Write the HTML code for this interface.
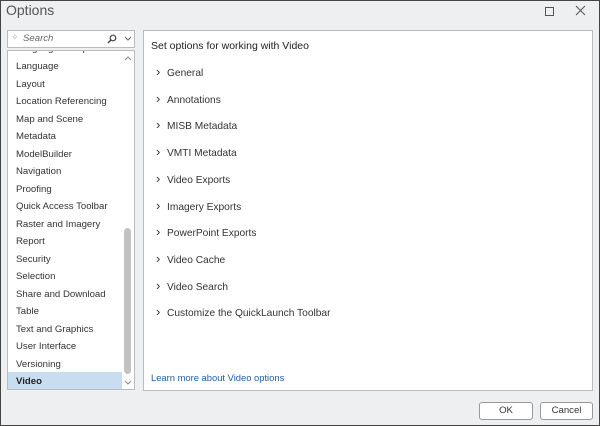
<!DOCTYPE html>
<html><head><style>
*{margin:0;padding:0;box-sizing:border-box}
body{width:600px;height:426px;background:#eeeff1;font-family:"Liberation Sans",sans-serif;color:#222;position:relative;overflow:hidden}
.frame{position:absolute;left:0;top:0;width:600px;height:426px;border:1px solid #444}
.title{position:absolute;left:6px;top:2px;font-size:14px;color:#555}
.abs{position:absolute}
.box{position:absolute;background:#fff;border:1px solid #bcbcbc}
.li{position:absolute;left:8px;font-size:9.6px;color:#333}
.ri{position:absolute;left:10px;font-size:10.2px;color:#333}
.ri span{display:inline-block;width:13px;font-size:13px;line-height:10px;position:relative;top:0px;left:2px}
.btn{position:absolute;top:402px;height:18px;background:#fff;border:1px solid #999;border-radius:3px;font-size:9.6px;text-align:center;line-height:16px;color:#333}
</style></head><body>
<div class="frame"></div>
<div class="title">Options</div>
<svg class="abs" style="left:544px;top:6px" width="12" height="12"><rect x="1.5" y="1.5" width="8" height="8" fill="none" stroke="#555" stroke-width="1"/></svg>
<svg class="abs" style="left:575px;top:5px" width="12" height="12"><path d="M1 1L10 10M10 1L1 10" stroke="#555" stroke-width="1"/></svg>

<div class="box" style="left:7px;top:30px;width:128px;height:18px">
 <span style="position:absolute;left:3px;top:1px;font-size:9px;color:#aaa">✧</span>
 <span style="position:absolute;left:15px;top:2px;font-size:9.6px;font-style:italic;color:#666">Search</span>
 <svg style="position:absolute;left:99px;top:3px" width="10" height="10"><circle cx="6" cy="4" r="2.8" fill="none" stroke="#444" stroke-width="1.2"/><path d="M4 6L1 9" stroke="#444" stroke-width="1.3"/></svg>
 <svg style="position:absolute;left:116px;top:5px" width="8" height="6"><path d="M1 1L4 4L7 1" fill="none" stroke="#666"/></svg>
</div>

<div class="box" style="left:7px;top:50px;width:128px;height:340px;overflow:hidden">
 <div class="li" style="top:-8px">Language Groups</div>
 <div class="li" style="top:10px">Language</div>
 <div class="li" style="top:27.5px">Layout</div>
 <div class="li" style="top:45px">Location Referencing</div>
 <div class="li" style="top:62.5px">Map and Scene</div>
 <div class="li" style="top:80px">Metadata</div>
 <div class="li" style="top:97.5px">ModelBuilder</div>
 <div class="li" style="top:115px">Navigation</div>
 <div class="li" style="top:132.5px">Proofing</div>
 <div class="li" style="top:150px">Quick Access Toolbar</div>
 <div class="li" style="top:167.5px">Raster and Imagery</div>
 <div class="li" style="top:185px">Report</div>
 <div class="li" style="top:202.5px">Security</div>
 <div class="li" style="top:220px">Selection</div>
 <div class="li" style="top:237.5px">Share and Download</div>
 <div class="li" style="top:255px">Table</div>
 <div class="li" style="top:272.5px">Text and Graphics</div>
 <div class="li" style="top:290px">User Interface</div>
 <div class="li" style="top:307.5px">Versioning</div>
 <div style="position:absolute;left:0;top:321px;width:114px;height:18px;background:#c9ddf0"></div>
 <div class="li" style="top:325px;font-weight:bold;color:#222">Video</div>
 <div style="position:absolute;left:114px;top:0;width:13px;height:340px;background:#fff"></div>
 <svg style="position:absolute;left:116px;top:4px" width="8" height="6"><path d="M1 5L4 2L7 5" fill="none" stroke="#888"/></svg>
 <div style="position:absolute;left:116px;top:177px;width:7px;height:146px;background:#c2c2c2;border-radius:4px"></div>
 <svg style="position:absolute;left:116px;top:329px" width="8" height="6"><path d="M1 1L4 4L7 1" fill="none" stroke="#888"/></svg>
</div>

<div class="box" style="left:143px;top:30px;width:450px;height:361px">
 <div style="position:absolute;left:7px;top:9px;font-size:10.5px;color:#222">Set options for working with Video</div>
 <div class="ri" style="top:36px"><span>›</span>General</div>
 <div class="ri" style="top:62.7px"><span>›</span>Annotations</div>
 <div class="ri" style="top:89.4px"><span>›</span>MISB Metadata</div>
 <div class="ri" style="top:116.1px"><span>›</span>VMTI Metadata</div>
 <div class="ri" style="top:142.8px"><span>›</span>Video Exports</div>
 <div class="ri" style="top:169.5px"><span>›</span>Imagery Exports</div>
 <div class="ri" style="top:196.2px"><span>›</span>PowerPoint Exports</div>
 <div class="ri" style="top:222.9px"><span>›</span>Video Cache</div>
 <div class="ri" style="top:249.6px"><span>›</span>Video Search</div>
 <div class="ri" style="top:276.3px"><span>›</span>Customize the QuickLaunch Toolbar</div>
 <div style="position:absolute;left:7px;top:341px;font-size:9.4px;color:#1f5fa6">Learn more about Video options</div>
</div>

<div class="btn" style="left:479px;width:54px">OK</div>
<div class="btn" style="left:540px;width:53px">Cancel</div>
</body></html>
